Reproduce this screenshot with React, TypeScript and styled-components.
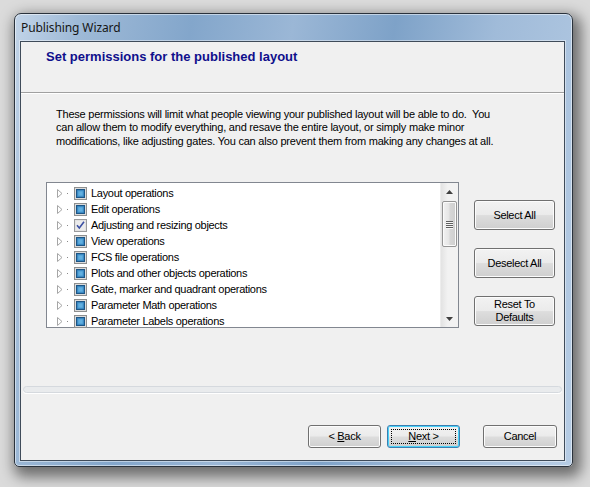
import React from "react";
import styled, { createGlobalStyle } from "styled-components";

const GlobalStyle = createGlobalStyle`
  html, body { margin: 0; padding: 0; }
  body {
    background: #dbdbdb;
    font-family: "Liberation Sans", Arial, sans-serif;
    font-size: 11px;
    color: #000;
  }
`;

const Desktop = styled.div`
  width: 590px;
  height: 487px;
  padding: 13px 0 0 14px;
  box-sizing: border-box;
  overflow: hidden;
`;

const Window = styled.div`
  width: 559px;
  height: 454px;
  box-sizing: border-box;
  display: flex;
  flex-direction: column;
  border: 1px solid #2a323c;
  border-radius: 7px 7px 5px 5px;
  background: linear-gradient(
    100deg,
    #c2d4e8 0%,
    #9fbad7 10%,
    #83a6cb 28%,
    #9bb7d6 44%,
    #7ea2c8 60%,
    #a0bbd9 76%,
    #b6cce4 100%
  );
  box-shadow: 4px 6px 14px 4px rgba(0, 0, 0, 0.5), inset 0 0 0 1px rgba(255, 255, 255, 0.5);
`;

const TitleBar = styled.div`
  height: 27px;
  display: flex;
  align-items: center;
  padding-left: 6px;
  font-family: "Noto Sans", "Open Sans", sans-serif;
  font-size: 12px;
  color: #151515;
  letter-spacing: -0.1px;
`;

const Client = styled.div`
  flex: 1;
  margin: 0 7px 5px 5px;
  border: 1px solid #3f4b59;
  background: #f0f0f0;
  display: flex;
  flex-direction: column;
  box-shadow: 0 0 0 1px rgba(255, 255, 255, 0.45);
`;

const Header = styled.div`
  height: 51px;
  box-sizing: border-box;
  padding: 7px 0 0 25px;
  border-bottom: 1px solid #a0a0a0;
  box-shadow: 0 1px 0 #ffffff;
`;

const HeaderTitle = styled.div`
  font-family: "Liberation Sans", Arial, sans-serif;
  font-weight: bold;
  font-size: 13px;
  line-height: 16px;
  color: #0f0f8c;
`;

const Description = styled.div`
  margin: 15px 0 0 35px;
  line-height: 13.4px;
  white-space: pre;
  letter-spacing: -0.22px;
`;

const ContentRow = styled.div`
  display: flex;
  margin: 34px 0 0 25px;
`;

const ListBox = styled.div`
  width: 413px;
  height: 146px;
  box-sizing: border-box;
  border: 1px solid #828790;
  background: #ffffff;
  display: flex;
`;

const Rows = styled.div`
  flex: 1;
  padding-top: 2px;
`;

const Row = styled.div`
  height: 16px;
  display: flex;
  align-items: center;
`;

const Expander = styled.span`
  width: 6px;
  height: 9px;
  margin-left: 10px;
  display: flex;
`;

const Dot = styled.span`
  width: 1px;
  height: 1px;
  background: #8a8a8a;
  margin-left: 4px;
`;

const CheckWrap = styled.span`
  width: 13px;
  height: 13px;
  margin-left: 6px;
  display: flex;
`;

const RowLabel = styled.span`
  margin-left: 4px;
  letter-spacing: -0.3px;
  white-space: nowrap;
`;

const ScrollBar = styled.div`
  width: 17px;
  display: flex;
  flex-direction: column;
  background: linear-gradient(90deg, #e3e3e3 0%, #f2f2f2 40%, #f2f2f2 100%);
  border-left: 1px solid #ededed;
`;

const ScrollArrow = styled.div`
  height: 17px;
  display: flex;
  align-items: center;
  justify-content: center;
`;

const ScrollTrack = styled.div`
  flex: 1;
  padding-top: 1px;
`;

const Thumb = styled.div`
  height: 46px;
  margin: 0 1px;
  box-sizing: border-box;
  border: 1px solid #959595;
  border-radius: 2px;
  background: linear-gradient(90deg, #f2f2f2 0%, #e6e6e6 45%, #d6d6d6 55%, #cfcfcf 100%);
  box-shadow: inset 0 0 0 1px #fbfbfb;
  display: flex;
  align-items: center;
  justify-content: center;
`;

const Grip = styled.div`
  display: flex;
  flex-direction: column;
  gap: 1px;
  span {
    display: block;
    width: 7px;
    height: 1px;
    background: #5f5f5f;
    box-shadow: 0 1px 0 #f6f6f6;
  }
`;

const SideButtons = styled.div`
  display: flex;
  flex-direction: column;
  gap: 18px;
  margin-left: 15px;
  padding-top: 18px;
`;

const WinButton = styled.button<{ $w: number; $h: number; $focused?: boolean }>`
  width: ${(p) => p.$w}px;
  height: ${(p) => p.$h}px;
  box-sizing: border-box;
  padding: 0;
  margin: 0;
  position: relative;
  font-family: "Liberation Sans", Arial, sans-serif;
  font-size: 11px;
  letter-spacing: -0.3px;
  line-height: 13px;
  color: #000;
  border: 1px solid ${(p) => (p.$focused ? "#3c7fb1" : "#707070")};
  border-radius: 3px;
  background: linear-gradient(
    180deg,
    #f2f2f2 0%,
    #ebebeb 48%,
    #dddddd 52%,
    #cfcfcf 100%
  );
  box-shadow: inset 0 0 0 1px ${(p) => (p.$focused ? "#48d1f8" : "#fcfcfc")};
  display: flex;
  align-items: center;
  justify-content: center;
  text-align: center;
`;

const FocusRect = styled.span`
  position: absolute;
  inset: 3px;
  border: 1px dotted #000;
  pointer-events: none;
`;

const Groove = styled.div`
  height: 5px;
  margin: 58px 2px 0 2px;
  border: 1px solid #d5d9de;
  border-radius: 4px;
  background: #e9ebed;
  box-shadow: 0 1px 0 #ffffff;
`;

const FooterRow = styled.div`
  display: flex;
  justify-content: flex-end;
  margin-top: 32px;
  padding-right: 7px;
`;

const NavGroup = styled.div`
  display: flex;
  gap: 6px;
  margin-right: 23px;
`;

const Mnemonic = styled.span`
  text-decoration: underline;
  text-underline-offset: 1px;
`;

const ExpanderIcon = () => (
  <svg width="6" height="9" viewBox="0 0 6 9">
    <path d="M0.5 0.5 L5 4.5 L0.5 8.5 Z" fill="#ffffff" stroke="#a6a6a6" strokeWidth="1" />
  </svg>
);

const PartialCheck = () => (
  <svg width="13" height="13" viewBox="0 0 13 13">
    <rect x="0.5" y="0.5" width="12" height="12" fill="#f3f3f3" stroke="#8e8f8f" />
    <rect x="1.5" y="1.5" width="10" height="10" fill="none" stroke="#dcdcdc" />
    <rect x="2.5" y="2.5" width="8" height="8" fill="#2a78b4" stroke="#1d5585" />
    <rect x="3.5" y="3.5" width="6" height="6" fill="#4c9bd2" />
    <rect x="4.5" y="4.5" width="4" height="4" fill="#62b0e0" />
  </svg>
);

const CheckedBox = () => (
  <svg width="13" height="13" viewBox="0 0 13 13">
    <rect x="0.5" y="0.5" width="12" height="12" fill="#f4f4f4" stroke="#9a9b9d" />
    <rect x="1.5" y="1.5" width="10" height="10" fill="#ebebeb" stroke="#e2e2e2" />
    <path d="M3 6.3 L5.3 9 L10 2.8" fill="none" stroke="#3a4fa2" strokeWidth="1.6" />
  </svg>
);

const items: { label: string; checked?: boolean }[] = [
  { label: "Layout operations" },
  { label: "Edit operations" },
  { label: "Adjusting and resizing objects", checked: true },
  { label: "View operations" },
  { label: "FCS file operations" },
  { label: "Plots and other objects operations" },
  { label: "Gate, marker and quadrant operations" },
  { label: "Parameter Math operations" },
  { label: "Parameter Labels operations" },
];

const description =
  "These permissions will limit what people viewing your published layout will be able to do.  You\n" +
  "can allow them to modify everything, and resave the entire layout, or simply make minor\n" +
  "modifications, like adjusting gates. You can also prevent them from making any changes at all.";

export default function App() {
  return (
    <>
      <GlobalStyle />
      <Desktop>
        <Window>
          <TitleBar>Publishing Wizard</TitleBar>
          <Client>
            <Header>
              <HeaderTitle>Set permissions for the published layout</HeaderTitle>
            </Header>
            <Description>{description}</Description>
            <ContentRow>
              <ListBox>
                <Rows>
                  {items.map((it) => (
                    <Row key={it.label}>
                      <Expander>
                        <ExpanderIcon />
                      </Expander>
                      <Dot />
                      <CheckWrap>{it.checked ? <CheckedBox /> : <PartialCheck />}</CheckWrap>
                      <RowLabel>{it.label}</RowLabel>
                    </Row>
                  ))}
                </Rows>
                <ScrollBar>
                  <ScrollArrow>
                    <svg width="7" height="4" viewBox="0 0 7 4">
                      <path d="M0 4 L3.5 0 L7 4 Z" fill="#404040" />
                    </svg>
                  </ScrollArrow>
                  <ScrollTrack>
                    <Thumb>
                      <Grip>
                        <span />
                        <span />
                        <span />
                        <span />
                      </Grip>
                    </Thumb>
                  </ScrollTrack>
                  <ScrollArrow>
                    <svg width="7" height="4" viewBox="0 0 7 4">
                      <path d="M0 0 L3.5 4 L7 0 Z" fill="#404040" />
                    </svg>
                  </ScrollArrow>
                </ScrollBar>
              </ListBox>
              <SideButtons>
                <WinButton $w={81} $h={30}>Select All</WinButton>
                <WinButton $w={81} $h={30}>Deselect All</WinButton>
                <WinButton $w={81} $h={30}>
                  Reset To
                  <br />
                  Defaults
                </WinButton>
              </SideButtons>
            </ContentRow>
            <Groove />
            <FooterRow>
              <NavGroup>
                <WinButton $w={73} $h={23}>
                  &lt;&nbsp;<Mnemonic>B</Mnemonic>ack
                </WinButton>
                <WinButton $w={73} $h={23} $focused>
                  <FocusRect />
                  <Mnemonic>N</Mnemonic>ext&nbsp;&gt;
                </WinButton>
              </NavGroup>
              <WinButton $w={74} $h={23}>Cancel</WinButton>
            </FooterRow>
          </Client>
        </Window>
      </Desktop>
    </>
  );
}
